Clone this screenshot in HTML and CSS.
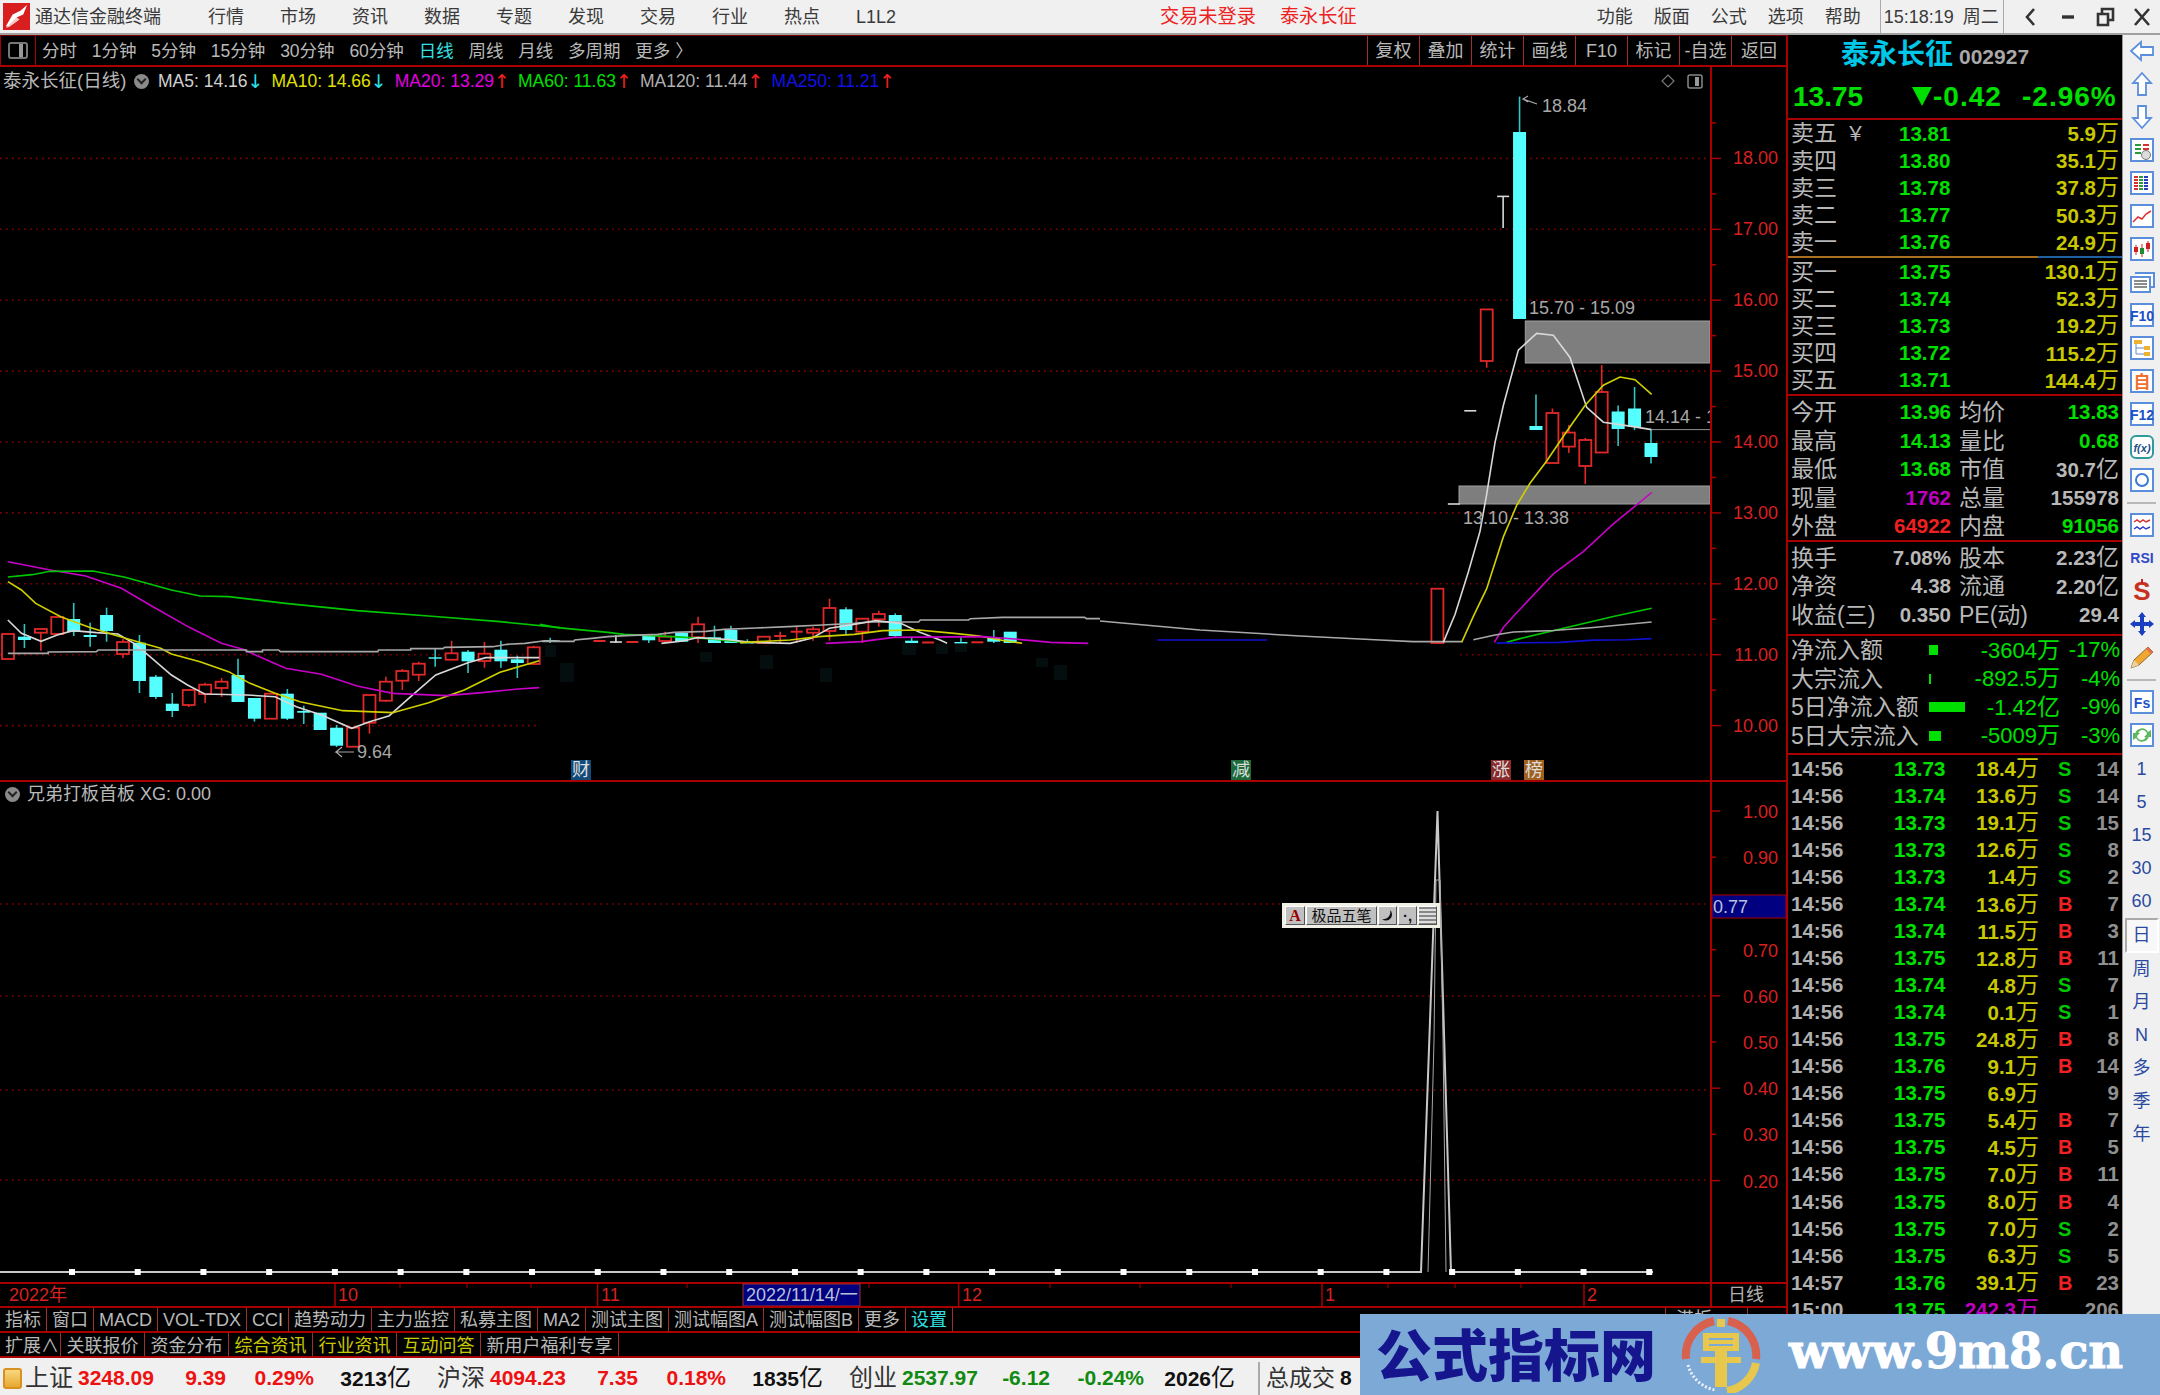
FILE: index.html

```html
<!DOCTYPE html>
<html lang="zh-CN">
<head>
  <meta charset="UTF-8" />
  <title>通达信金融终端</title>
  <link rel="stylesheet" href="styles.css">
</head>
<body>
  <header class="titlebar">
    <svg class="logo" viewBox="0 0 28 28">
      <rect width="28" height="28" fill="#d81e1e" />
      <path d="M3 24 L10 12 L18 8 L25 2 L21 12 L14 15 L17 17 L6 25 Z" fill="#fff" />
      <path d="M3 26 L6 25 L17 17 L14 15 Z" fill="#f3c9c0" />
    </svg>
    <span class="app-name">通达信金融终端</span>
    <nav class="menu">
      <a>行情</a><a>市场</a><a>资讯</a><a>数据</a><a>专题</a><a>发现</a><a>交易</a><a>行业</a><a>热点</a><a>L1L2</a>
    </nav>
    <span class="login">交易未登录</span>
    <span class="login stock">泰永长征</span>
    <nav class="menu-right">
      <a>功能</a><a>版面</a><a>公式</a><a>选项</a><a>帮助</a>
    </nav>
    <div class="clock"><span>15:18:19</span><span>周二</span></div>
    <div class="win-btns">
      <svg viewBox="0 0 24 24"><path d="M15 4 L8 12 L15 20" /></svg>
      <svg viewBox="0 0 24 24"><path d="M6 12 H18" class="thick" /></svg>
      <svg viewBox="0 0 24 24"><path d="M5 9 H15 V20 H5 Z M9 9 V4 H20 V15 H15" /></svg>
      <svg viewBox="0 0 24 24"><path d="M5 4 L19 20 M19 4 L5 20" /></svg>
    </div>
  </header>

  <div class="workspace">
    <div class="main-col">
      <div class="toolbar">
        <div class="panel-btn"><i></i></div>
        <div class="periods">
          <a>分时</a><a>1分钟</a><a>5分钟</a><a>15分钟</a><a>30分钟</a><a>60分钟</a><a class="on">日线</a><a>周线</a><a>月线</a><a>多周期</a><a>更多 〉</a>
        </div>
        <div class="tools">
          <a>复权</a><a>叠加</a><a>统计</a><a>画线</a><a>F10</a><a>标记</a><a>-自选</a><a>返回</a>
        </div>
      </div>

      <div class="chart-wrap">
        <svg id="chart" class="chart" viewBox="0 67 1786 1239" width="1786" height="1239"></svg>
        <div class="legend">
          <span class="legend-name">泰永长征(日线)</span>
          <span class="legend-dot"></span>
          <span class="ma-white">MA5: 14.16</span><span class="down">↓</span>
          <span class="ma-yellow">MA10: 14.66</span><span class="down">↓</span>
          <span class="ma-pink">MA20: 13.29</span><span class="up">↑</span>
          <span class="ma-green">MA60: 11.63</span><span class="up">↑</span>
          <span class="ma-gray">MA120: 11.44</span><span class="up">↑</span>
          <span class="ma-blue">MA250: 11.21</span><span class="up">↑</span>
        </div>
        <div class="legend legend-low">
          <span class="legend-dot"></span>
          <span class="legend-name">兄弟打板首板 XG: 0.00</span>
        </div>
        <div class="ime">
          <span class="ime-a">A</span>
          <span class="ime-name">极品五笔</span>
          <span class="ime-btn"><svg viewBox="0 0 14 14" width="14" height="14"><path d="M9 1 A6 6 0 1 1 1 10 A7 7 0 0 0 9 1 Z" fill="#111" /></svg></span>
          <span class="ime-btn">·,</span>
          <span class="ime-btn ime-kb"></span>
        </div>
      </div>

      <div class="tabs tabs-one">
        <a>指标</a><a>窗口</a><a>MACD</a><a>VOL-TDX</a><a>CCI</a><a>趋势动力</a><a>主力监控</a><a>私募主图</a><a>MA2</a><a>测试主图</a><a>测试幅图A</a><a>测试幅图B</a><a>更多</a><a class="cyan">设置</a>
        <a class="tab-end">港板</a>
      </div>
      <div class="tabs tabs-two">
        <a class="tab-first">扩展∧</a><a>关联报价</a><a>资金分布</a><a class="yellow">综合资讯</a><a class="yellow">行业资讯</a><a class="yellow">互动问答</a><a>新用户福利专享</a>
      </div>
    </div>

    <aside class="quote">
      <div class="q-head">
        <div class="q-title"><span class="q-name">泰永长征</span><span class="q-code">002927</span></div>
        <div class="q-price">
          <span class="q-last">13.75</span>
          <span class="q-chg"><i class="tri"></i>-0.42</span>
          <span>-2.96%</span>
        </div>
      </div>

      <div class="book">
        <div class="b-row"><span>卖五 <em>￥</em></span><b>13.81</b><u>5.9<s>万</s></u></div>
        <div class="b-row"><span>卖四</span><b>13.80</b><u>35.1<s>万</s></u></div>
        <div class="b-row"><span>卖三</span><b>13.78</b><u>37.8<s>万</s></u></div>
        <div class="b-row"><span>卖二</span><b>13.77</b><u>50.3<s>万</s></u></div>
        <div class="b-row"><span>卖一</span><b>13.76</b><u>24.9<s>万</s></u></div>
      </div>
      <div class="mid-line"></div>
      <div class="book line-b">
        <div class="b-row"><span>买一</span><b>13.75</b><u>130.1<s>万</s></u></div>
        <div class="b-row"><span>买二</span><b>13.74</b><u>52.3<s>万</s></u></div>
        <div class="b-row"><span>买三</span><b>13.73</b><u>19.2<s>万</s></u></div>
        <div class="b-row"><span>买四</span><b>13.72</b><u>115.2<s>万</s></u></div>
        <div class="b-row"><span>买五</span><b>13.71</b><u>144.4<s>万</s></u></div>
      </div>

      <div class="stats line-b">
        <div class="s-row"><span>今开</span><b>13.96</b><span>均价</span><b>13.83</b></div>
        <div class="s-row"><span>最高</span><b>14.13</b><span>量比</span><b>0.68</b></div>
        <div class="s-row"><span>最低</span><b>13.68</b><span>市值</span><b class="w">30.7<s>亿</s></b></div>
        <div class="s-row"><span>现量</span><b class="p">1762</b><span>总量</span><b class="w">155978</b></div>
        <div class="s-row"><span>外盘</span><b class="r">64922</b><span>内盘</span><b>91056</b></div>
      </div>

      <div class="stats fin line-b">
        <div class="s-row"><span>换手</span><b class="w">7.08%</b><span>股本</span><b class="w">2.23<s>亿</s></b></div>
        <div class="s-row"><span>净资</span><b class="w">4.38</b><span>流通</span><b class="w">2.20<s>亿</s></b></div>
        <div class="s-row"><span>收益(三)</span><b class="w">0.350</b><span>PE(动)</span><b class="w">29.4</b></div>
      </div>

      <div class="flow line-b">
        <div class="f-row"><span>净流入额</span><i class="bar bar-a"></i><b>-3604<s>万</s></b><b>-17%</b></div>
        <div class="f-row"><span>大宗流入</span><i class="bar bar-b"></i><b>-892.5<s>万</s></b><b>-4%</b></div>
        <div class="f-row"><span>5日净流入额</span><i class="bar bar-c"></i><b>-1.42<s>亿</s></b><b>-9%</b></div>
        <div class="f-row"><span>5日大宗流入</span><i class="bar bar-d"></i><b>-5009<s>万</s></b><b>-3%</b></div>
      </div>

      <div class="ticks">
        <div class="t-row"><span>14:56</span><b>13.73</b><u>18.4<s>万</s></u><em class="s">S</em><span class="n">14</span></div>
        <div class="t-row"><span>14:56</span><b>13.74</b><u>13.6<s>万</s></u><em class="s">S</em><span class="n">14</span></div>
        <div class="t-row"><span>14:56</span><b>13.73</b><u>19.1<s>万</s></u><em class="s">S</em><span class="n">15</span></div>
        <div class="t-row"><span>14:56</span><b>13.73</b><u>12.6<s>万</s></u><em class="s">S</em><span class="n">8</span></div>
        <div class="t-row"><span>14:56</span><b>13.73</b><u>1.4<s>万</s></u><em class="s">S</em><span class="n">2</span></div>
        <div class="t-row"><span>14:56</span><b>13.74</b><u>13.6<s>万</s></u><em>B</em><span class="n">7</span></div>
        <div class="t-row"><span>14:56</span><b>13.74</b><u>11.5<s>万</s></u><em>B</em><span class="n">3</span></div>
        <div class="t-row"><span>14:56</span><b>13.75</b><u>12.8<s>万</s></u><em>B</em><span class="n">11</span></div>
        <div class="t-row"><span>14:56</span><b>13.74</b><u>4.8<s>万</s></u><em class="s">S</em><span class="n">7</span></div>
        <div class="t-row"><span>14:56</span><b>13.74</b><u>0.1<s>万</s></u><em class="s">S</em><span class="n">1</span></div>
        <div class="t-row"><span>14:56</span><b>13.75</b><u>24.8<s>万</s></u><em>B</em><span class="n">8</span></div>
        <div class="t-row"><span>14:56</span><b>13.76</b><u>9.1<s>万</s></u><em>B</em><span class="n">14</span></div>
        <div class="t-row"><span>14:56</span><b>13.75</b><u>6.9<s>万</s></u><em></em><span class="n">9</span></div>
        <div class="t-row"><span>14:56</span><b>13.75</b><u>5.4<s>万</s></u><em>B</em><span class="n">7</span></div>
        <div class="t-row"><span>14:56</span><b>13.75</b><u>4.5<s>万</s></u><em>B</em><span class="n">5</span></div>
        <div class="t-row"><span>14:56</span><b>13.75</b><u>7.0<s>万</s></u><em>B</em><span class="n">11</span></div>
        <div class="t-row"><span>14:56</span><b>13.75</b><u>8.0<s>万</s></u><em>B</em><span class="n">4</span></div>
        <div class="t-row"><span>14:56</span><b>13.75</b><u>7.0<s>万</s></u><em class="s">S</em><span class="n">2</span></div>
        <div class="t-row"><span>14:56</span><b>13.75</b><u>6.3<s>万</s></u><em class="s">S</em><span class="n">5</span></div>
        <div class="t-row"><span>14:57</span><b>13.76</b><u>39.1<s>万</s></u><em>B</em><span class="n">23</span></div>
        <div class="t-row"><span>15:00</span><b>13.75</b><u class="p">242.3<s>万</s></u><em></em><span class="n">206</span></div>
      </div>
    </aside>

    <div class="side">
      <svg class="ico" viewBox="0 0 28 28"><path class="arw" d="M3 14 L13 5 V10 H25 V18 H13 V23 Z" /></svg>
      <svg class="ico" viewBox="0 0 28 28"><path class="arw" d="M14 3 L23 13 H18 V25 H10 V13 H5 Z" /></svg>
      <svg class="ico" viewBox="0 0 28 28"><path class="arw" d="M14 25 L23 15 H18 V3 H10 V15 H5 Z" /></svg>
      <svg class="ico" viewBox="0 0 28 28"><rect class="bx" x="3" y="3" width="22" height="22" /><path d="M7 9 H13 M7 13 H13" stroke="#2a9a3a" stroke-width="2" /><path d="M15 9 H21 M15 13 H21" stroke="#d83030" stroke-width="2" /><path d="M7 17 H13" stroke="#2a9a3a" stroke-width="2" /><circle cx="18" cy="19" r="4.5" fill="#ddd" stroke="#777" /></svg>
      <svg class="ico" viewBox="0 0 28 28"><rect class="bx" x="3" y="3" width="22" height="22" /><path d="M8 7 V21" stroke="#d83030" stroke-width="4" stroke-dasharray="2 1" /><path d="M13 7 V21" stroke="#2a9a3a" stroke-width="4" stroke-dasharray="2 1" /><path d="M18 7 V21" stroke="#2040c0" stroke-width="4" stroke-dasharray="2 1" /></svg>
      <svg class="ico" viewBox="0 0 28 28"><rect class="bx" x="3" y="3" width="22" height="22" /><path d="M5 20 L10 15 L14 17 L18 12 L23 9" fill="none" stroke="#e03030" stroke-width="1.5" /></svg>
      <svg class="ico" viewBox="0 0 28 28"><rect class="bx" x="3" y="3" width="22" height="22" /><path d="M8 10 V20 M14 9 V22 M20 6 V17" stroke="#d02020" /><rect x="6" y="12" width="4" height="5" fill="#d02020" /><rect x="12" y="13" width="4" height="6" fill="#208a30" /><rect x="18" y="8" width="4" height="6" fill="#d02020" /></svg>
      <svg class="ico" viewBox="0 0 28 28"><path class="bxl" d="M7 5 H26 V19 H22 M3 9 H22 V24 H3 Z" /><path d="M6 13 H19 M6 16 H19 M6 19 H19" stroke="#666" stroke-width="1.5" /></svg>
      <svg class="ico" viewBox="0 0 28 28"><rect class="bx" x="3" y="3" width="22" height="22" /><text class="ico-t" x="14" y="19.5">F10</text></svg>
      <svg class="ico" viewBox="0 0 28 28"><rect class="bx" x="3" y="3" width="22" height="22" /><path d="M8 9 V20 H16 M8 14 H16" fill="none" stroke="#6688cc" /><rect x="6" y="6" width="8" height="4" fill="#f0b030" /><rect x="16" y="12" width="6" height="4" fill="#f0b030" /><rect x="16" y="18" width="6" height="4" fill="#f0b030" /></svg>
      <svg class="ico" viewBox="0 0 28 28"><rect class="bx" x="3" y="3" width="22" height="22" /><text class="ico-t ico-o" x="14" y="21">自</text></svg>
      <svg class="ico" viewBox="0 0 28 28"><rect class="bx" x="3" y="3" width="22" height="22" /><text class="ico-t" x="14" y="19.5">F12</text></svg>
      <svg class="ico" viewBox="0 0 28 28"><rect x="3" y="3" width="22" height="22" rx="5" fill="#fff" stroke="#2f9a9a" stroke-width="2" /><text class="ico-f" x="14" y="19">f(x)</text></svg>
      <svg class="ico" viewBox="0 0 28 28"><rect class="bx" x="3" y="3" width="22" height="22" /><circle cx="14" cy="14" r="6" fill="none" stroke="#3a7ad8" stroke-width="2" /></svg>
      <hr />
      <svg class="ico" viewBox="0 0 28 28"><rect class="bx" x="3" y="3" width="22" height="22" /><path d="M6 11 L9 9 L12 11 L15 9 L18 11 L22 9" fill="none" stroke="#d83030" stroke-width="1.5" /><path d="M6 18 L9 16 L12 18 L15 16 L18 18 L22 16" fill="none" stroke="#3040d0" stroke-width="1.5" /></svg>
      <svg class="ico" viewBox="0 0 28 28"><text class="ico-rsi" x="14" y="19">RSI</text></svg>
      <svg class="ico" viewBox="0 0 28 28"><text class="ico-s" x="14" y="23">S</text><path d="M14 2 L14 7" stroke="#d02020" stroke-width="2" /></svg>
      <svg class="ico" viewBox="0 0 28 28"><path d="M14 2 L18 7 H16 V12 H21 V10 L26 14 L21 18 V16 H16 V21 H18 L14 26 L10 21 H12 V16 H7 V18 L2 14 L7 10 V12 H12 V7 H10 Z" fill="#1a3fc0" /></svg>
      <svg class="ico" viewBox="0 0 28 28"><path d="M3 25 L6 17 L20 4 L25 9 L11 22 Z" fill="#f0a830" stroke="#8a6a30" /><path d="M3 25 L6 17 L11 22 Z" fill="#eed0a0" /><path d="M20 4 L25 9 L23 11 L18 6 Z" fill="#e86a50" /></svg>
      <hr />
      <svg class="ico" viewBox="0 0 28 28"><rect class="bx" x="3" y="3" width="22" height="22" /><text class="ico-t" x="14" y="19.5">Fs</text></svg>
      <svg class="ico ico-last" viewBox="0 0 28 28"><rect class="bx" x="3" y="3" width="22" height="22" fill="#e8f0e8" /><path d="M7 13 A7 7 0 0 1 20 11 L23 9 V16 H16 L19 13 A4 4 0 0 0 10 14 Z M21 15 A7 7 0 0 1 8 17 L5 19 V12 H12 L9 15 A4 4 0 0 0 18 14 Z" fill="#5cb85c" /></svg>
      <a class="per">1</a><a class="per">5</a><a class="per">15</a><a class="per">30</a><a class="per">60</a>
      <a class="per active">日</a><a class="per">周</a><a class="per">月</a><a class="per">N</a><a class="per">多</a><a class="per">季</a><a class="per">年</a>
    </div>
  </div>

  <footer class="status">
    <i class="st-ico"></i>
    <span class="st-name">上证</span><span class="st-val red">3248.09</span><span class="st-chg red">9.39</span><span class="st-pct red">0.29%</span><span class="st-amt">3213<s>亿</s></span>
    <span class="st-name gap">沪深</span><span class="st-val red">4094.23</span><span class="st-chg red">7.35</span><span class="st-pct red">0.18%</span><span class="st-amt">1835<s>亿</s></span>
    <span class="st-name gap">创业</span><span class="st-val grn">2537.97</span><span class="st-chg grn">-6.12</span><span class="st-pct grn wide">-0.24%</span><span class="st-amt wide">2026<s>亿</s></span>
    <span class="st-total">总成交</span><span class="st-sum">8</span>
  </footer>

  <div class="watermark">
    <span class="wm-cn">公式指标网</span>
    <svg class="wm-logo" viewBox="0 0 80 76">
      <path d="M5 42 A35 35 0 0 1 33 4" fill="none" stroke="#d8614e" stroke-width="8" />
      <path d="M47 4 A35 35 0 0 1 75 42" fill="none" stroke="#d8614e" stroke-width="8" />
      <path d="M75 46 A35 35 0 0 1 46 74" fill="none" stroke="#e8c84c" stroke-width="8" />
      <path d="M7 48 A35 35 0 0 0 34 73" fill="none" stroke="#eef2f8" stroke-width="3" stroke-dasharray="2 2" />
      <path d="M36 2 H44 V10 H36 Z M22 16 H58 V34 H46 V40 H60 V46 H46 V70 H34 V46 H20 V40 H34 V34 H22 Z" fill="#e8c84c" />
      <path d="M28 22 H52 M28 28 H52" stroke="#7da9d7" stroke-width="2" />
    </svg>
    <span class="wm-url">www.9m8.cn</span>
  </div>

  <script src="chart.js"></script>
</body>
</html>
```

FILE: styles.css

```css
* { box-sizing: border-box; }
html, body { margin: 0; padding: 0; }
body {
  width: 2160px;
  height: 1395px;
  overflow: hidden;
  position: relative;
  background: #000;
  font-family: "Liberation Sans", "Noto Sans CJK SC", sans-serif;
  font-size: 18px;
  line-height: 22px;
  color: #b8b8b8;
  display: flex;
  flex-direction: column;
}
s { text-decoration: none; font-weight: 400; }
u { text-decoration: none; }
em { font-style: normal; }

/* title bar */
.titlebar { height: 35px; flex: none; display: flex; align-items: center; background: #f0f0f0; border-bottom: 2px solid #a0a0a0; color: #3a3a3a; }
.logo { width: 27px; height: 27px; margin-left: 3px; flex: none; }
.app-name { margin-left: 5px; width: 173px; font-size: 18px; }
.menu { display: flex; width: 785px; }
.menu a { width: 72px; flex: none; }
.login { color: #ee2222; font-size: 19.2px; margin-left: 167px; }
.login.stock { margin-left: 24px; }
.menu-right { display: flex; margin-left: 240px; width: 283px; }
.menu-right a { width: 57px; flex: none; }
.clock { display: flex; gap: 9px; align-items: center; width: 124px; height: 33px; padding-left: 3px; border-left: 1px solid #aaa; border-right: 1px solid #aaa; }
.win-btns { display: flex; flex: 1; padding-left: 15px; gap: 13px; }
.win-btns svg { width: 24px; height: 24px; }
.win-btns path { fill: none; stroke: #333; stroke-width: 2.6; }
.win-btns .thick { stroke-width: 3.4; }

.workspace { flex: 1; display: flex; min-height: 0; }
.main-col { width: 1786px; flex: none; display: flex; flex-direction: column; }

/* period toolbar */
.toolbar { height: 32px; flex: none; display: flex; align-items: center; border-top: 1px solid #700; border-bottom: 2px solid #a80000; }
.panel-btn { width: 36px; height: 100%; display: flex; align-items: center; justify-content: center; border-right: 1px solid #a80000; border-left: 1px solid #a80000; }
.panel-btn i { width: 20px; height: 17px; border: 2px solid #777; border-radius: 3px; background: linear-gradient(90deg, #000 55%, #999 55%, #999 80%, #000 80%); }
.periods { display: flex; gap: 14.8px; margin-left: 6px; font-size: 17.5px; }
.periods .on { color: #35e0e0; }
.tools { margin-left: auto; display: flex; height: 100%; }
.tools a { display: flex; align-items: center; justify-content: center; width: 52px; border-left: 1px solid #a03030; }
.tools a:last-child { width: 55px; }

/* chart */
.chart-wrap { position: relative; width: 1786px; height: 1239px; flex: none; }
.chart { display: block; background: #000; }
.chart text { font-family: "Liberation Sans", "Noto Sans CJK SC", sans-serif; font-size: 18px; }
.legend { position: absolute; left: 3px; top: 2px; height: 24px; display: flex; align-items: center; font-size: 17.5px; white-space: nowrap; }
.legend-low { top: 715px; left: 5px; }
.legend-low .legend-name { margin-left: 7px; width: auto; font-size: 18px; }
.legend-name { color: #b8b8b8; width: 131px; font-size: 18.5px; }
.legend-dot { position: relative; width: 15px; height: 15px; border-radius: 50%; background: #8a8a8a; margin-right: 9px; flex: none; }
.legend-dot::after { content: ""; position: absolute; left: 4px; top: 2px; width: 5px; height: 5px; border-right: 2px solid #222; border-bottom: 2px solid #222; transform: rotate(45deg); }
.legend-low .legend-dot { margin-right: 0; }
.legend .up, .legend .down { width: 24px; font-family: "DejaVu Sans", sans-serif; font-size: 19px; }
.up { color: #f02020; }
.down { color: #25e0e8; }
.ma-white { color: #d0d0d0; }
.ma-yellow { color: #e0e000; }
.ma-pink { color: #e000e0; }
.ma-green { color: #00e000; }
.ma-gray { color: #b0b0b0; }
.ma-blue { color: #1010e8; }

.ime { position: absolute; left: 1282px; top: 836px; width: 158px; height: 25px; padding: 3px; background: #f0f0e6; display: flex; gap: 1px; color: #111; }
.ime span { background: #c0c0c0; border-top: 1px solid #fff; border-left: 1px solid #fff; border-bottom: 1px solid #555; border-right: 1px solid #555; display: flex; align-items: center; justify-content: center; height: 19px; line-height: 1; }
.ime-a { width: 20px; color: #900; font-family: "Liberation Serif", serif; font-weight: 700; font-size: 16px; }
.ime-name { width: 71px; font-size: 15px; white-space: nowrap; }
.ime-btn { width: 19px; font-size: 15px; font-weight: 700; }
.ime-kb { background: repeating-linear-gradient(#888 0 2px, #ddd 2px 4px) !important; }

/* bottom tabs */
.tabs { display: flex; flex: none; border-top: 2px solid #a80000; }
.tabs-one { height: 25px; position: relative; }
.tabs-two { height: 27px; border-bottom: 2px solid #a80000; }
.tabs a { display: flex; align-items: center; padding: 0 5px; border-right: 1px solid #a03030; white-space: nowrap; font-size: 18px; }
.tabs-two a { padding: 2px 5.5px 0; }
.tabs a.tab-first { width: 61px; padding: 2px 3px 0 5px; overflow: hidden; }
.tabs .yellow { color: #c8c800; }
.tabs .cyan { color: #2ee0e0; }
.tabs a.tab-end { position: absolute; left: 1665px; top: 0; height: 100%; padding-left: 10px; width: 83px; border-left: 1px solid #a03030; align-items: flex-start; }

/* quote panel */
.quote { width: 337px; flex: none; border-left: 2px solid #a80000; border-right: 1px solid #999; display: flex; flex-direction: column; overflow: hidden; background: #000; font-size: 20.5px; }
.quote b { font-weight: 700; color: #00e000; }
.quote s { font-size: 23px; }
.line-b { border-bottom: 2px solid #a80000; }
.q-head { height: 85px; flex: none; border-bottom: 2px solid #a80000; }
.q-title { height: 40px; padding-left: 53px; display: flex; align-items: center; gap: 6px; }
.q-name { color: #00c8e8; font-size: 28px; font-weight: 700; line-height: 32px; }
.q-code { font-size: 21px; font-weight: 700; color: #a8a8a8; padding-top: 4px; }
.q-price { display: flex; align-items: center; height: 43px; padding-left: 5px; font-size: 28px; font-weight: 700; color: #00e000; letter-spacing: 1px; }
.q-last { width: 119px; letter-spacing: 0; }
.q-chg { width: 110px; display: flex; align-items: center; }
.tri { width: 0; height: 0; border-left: 10px solid transparent; border-right: 10px solid transparent; border-top: 19px solid #00e000; margin-right: 1px; }

.book { flex: none; }
.b-row { height: 27.2px; display: grid; grid-template-columns: 108px 60px 1fr; align-items: center; padding: 0 3px; }
.b-row span { font-size: 23px; }
.b-row em { font-size: 20px; margin-left: 2px; }
.b-row u { text-align: right; color: #c8c800; font-weight: 700; }
.b-row s { color: #c8c800; }
.mid-line { height: 2px; flex: none; background: linear-gradient(90deg, #a87020 75%, #2060a0 75%); }

.stats { flex: none; padding-top: 2px; }
.s-row { height: 28.5px; display: grid; grid-template-columns: 50px 110px 60px 1fr; align-items: center; padding: 0 3px; }
.s-row span { font-size: 23px; white-space: nowrap; }
.s-row b { text-align: right; }
.s-row span:nth-child(3) { padding-left: 8px; }
.quote .w { color: #b8b8b8; }
.quote .p { color: #c000c0; }
.quote .r { color: #f02020; }
.fin { padding: 1px 0 5px; }

.flow { flex: none; padding-bottom: 3px; }
.f-row { height: 28.6px; display: grid; grid-template-columns: 138px 40px 91px 1fr; align-items: center; padding-left: 3px; padding-right: 2px; }
.f-row span { font-size: 23px; white-space: nowrap; }
.f-row b { text-align: right; font-weight: 400; font-size: 22px; }
.f-row s { font-size: 23px; }
.f-row .bar { background: #00e000; height: 10px; }
.bar-a { width: 9px; }
.bar-b { width: 1.5px; }
.bar-c { width: 36px; }
.bar-d { width: 12px; }

.ticks { flex: none; }
.t-row { height: 27.05px; display: grid; grid-template-columns: 103px 60px 85px 40px 1fr; align-items: center; padding: 0 3px; }
.t-row span { font-weight: 700; color: #b0b0b0; }
.t-row u { text-align: right; color: #c8c800; font-weight: 700; white-space: nowrap; }
.t-row u.p { color: #c000c0; }
.t-row s { color: #c8c800; }
.t-row u.p s { color: #c000c0; }
.t-row em { color: #ee2222; padding-left: 19px; font-weight: 700; font-size: 20px; }
.t-row em.s { color: #00c800; }
.t-row .n { text-align: right; color: #909090; }

/* right icon strip */
.side { width: 37px; flex: none; background: #f0f0f0; display: flex; flex-direction: column; align-items: center; }
.ico { width: 28px; height: 28px; margin: 2.5px 0; flex: none; }
.ico:first-child { margin-top: 2px; }
.ico-last { margin-bottom: 3.5px; }
.arw { fill: #fff; stroke: #5b8fdc; stroke-width: 1.8; }
.bx { fill: #fff; stroke: #5b8fdc; stroke-width: 2; }
.bxl { fill: #fff; stroke: #5b8fdc; stroke-width: 2; }
.ico-t { font: 700 14px "Liberation Sans", sans-serif; fill: #2050c8; text-anchor: middle; }
.ico-o { font: 700 17px "Noto Sans CJK SC", sans-serif; fill: #f07030; }
.ico-f { font: italic 700 11px "Liberation Sans", sans-serif; fill: #205088; text-anchor: middle; }
.ico-rsi { font: 700 14px "Liberation Sans", sans-serif; fill: #3048c8; text-anchor: middle; }
.ico-s { font: 700 26px "Liberation Sans", sans-serif; fill: #c83020; text-anchor: middle; }
.side hr { width: 29px; height: 2px; margin: 5px 0 5px; border: none; background: #b8b8b8; flex: none; }
.per { height: 33px; width: 100%; flex: none; display: flex; align-items: center; justify-content: center; color: #2a4aa0; font-size: 18px; }
.per.active { border: 2px solid #fff; border-left-color: #aaa; border-top-color: #aaa; width: 34px; height: 35px; background: #f8f8f8; }

/* status bar */
.status { height: 37px; flex: none; background: #f0f0f0; color: #111; display: flex; align-items: center; padding-top: 3px; font-size: 21px; white-space: nowrap; }
.status s { font-size: 24px; }
.st-ico { width: 19px; height: 21px; margin-left: 3px; border: 2px solid #d89020; border-radius: 3px; background: linear-gradient(#f8d880, #e8a830); flex: none; }
.st-name { width: 48px; margin-left: 3px; font-size: 24px; color: #333; }
.st-name.gap { margin-left: 26px; }
.st-val { width: 77px; margin-left: 5px; font-weight: 700; }
.st-chg { width: 71px; text-align: right; font-weight: 700; }
.st-pct { width: 88px; text-align: right; font-weight: 700; }
.st-pct.wide { width: 94px; }
.st-amt { width: 97px; text-align: right; font-weight: 700; }
.st-amt.wide { width: 91px; }
.red { color: #ee1111; }
.grn { color: #108a10; }
.st-total { margin-left: 23px; padding-left: 6px; border-left: 2px solid #aaa; font-size: 23px; color: #333; height: 33px; line-height: 33px; width: 82px; }
.st-sum { font-weight: 700; }

/* site stamp over the bottom right corner */
.watermark { position: absolute; left: 1360px; top: 1314px; width: 800px; height: 81px; background: #7da9d7; display: flex; align-items: center; }
.wm-cn { margin-left: 16px; width: 298px; color: #15158e; font-family: "Noto Sans CJK SC", sans-serif; font-size: 56px; font-weight: 900; line-height: 1; margin-top: -5px; }
.wm-logo { width: 80px; height: 76px; margin-left: 7px; flex: none; }
.wm-url { margin-left: 28px; color: #fff; font-family: "DejaVu Serif", serif; font-weight: 700; font-size: 48px; -webkit-text-stroke: 1px #fff; line-height: 1; margin-top: -8px; white-space: nowrap; }
```

FILE: chart.js

```js
// draws the kline and indicator panes into the one svg
const svg = document.getElementById('chart');
const CX = i => 8 + 16.43 * i;
const PY = p => 158.4 + (18 - p) * 70.9;
const RED = '#e02828', CYAN = '#55ffff', WICK = '#30c4c4';
let out = '';

function line(x1, y1, x2, y2, color, w) {
  out += `<line x1="${x1}" y1="${y1}" x2="${x2}" y2="${y2}" stroke="${color}" stroke-width="${w || 1}"/>`;
}
function dots(y, x1, x2) {
  out += `<line x1="${x1}" y1="${y}" x2="${x2}" y2="${y}" stroke="#860000" stroke-width="1.6" stroke-dasharray="1.6 4.4"/>`;
}
function text(x, y, s, color, anchor) {
  out += `<text x="${x}" y="${y}" fill="${color}" text-anchor="${anchor || 'start'}" dominant-baseline="central">${s}</text>`;
}
function rect(x, y, w, h, fill, stroke) {
  out += `<rect x="${x}" y="${y}" width="${w}" height="${h}" fill="${fill}"${stroke ? ` stroke="${stroke}" stroke-width="1"` : ''}/>`;
}
function poly(color, pts, w) {
  out += `<polyline fill="none" stroke="${color}" stroke-width="${w || 1.6}" points="${pts.map(p => p.join(',')).join(' ')}"/>`;
}

// one coordinate system per source crop of the chart
const left = pts => pts.map(p => [p[0] / 2.8, 540 + p[1] / 3]);
const mid = pts => pts.map(p => [540 + p[0] / 2.8, 580 + p[1] / 3]);
const right = pts => pts.map(p => [1380 + p[0] / 3, 80 + p[1] / 2.703]);

// grid
[18, 17, 16, 15, 14, 13, 12].forEach(p => dots(PY(p), 0, 1710));
[11, 10].forEach(p => dots(PY(p), 0, 537));
dots(PY(11), 1460, 1710);
[904, 996, 1090, 1180].forEach(y => dots(y, 0, 1710));

// faint leftovers under the cut in the middle of the pane
[[545, 645, 11, 12], [560, 663, 14, 19], [902, 643, 14, 12], [936, 644, 12, 10], [955, 644, 12, 8], [1036, 658, 12, 9], [1054, 665, 13, 15], [700, 652, 12, 10], [760, 655, 13, 14], [820, 668, 12, 14]]
  .forEach(r => rect(r[0], r[1], r[2], r[3], '#050e0e'));

// gray price zones
rect(1525.3, 321, 184.7, 42, '#7e7e7e', '#a0a0a0');
rect(1459, 486, 251, 18, '#7e7e7e', '#a0a0a0');

// [index, colour, bodyTop, bodyBottom, high, low]
const candles = [
  [0, 'r', 634, 659], [1, 'c', 636.7, 640, 624, 648], [2, 'r', 629, 632.7, 629, 650.7], [3, 'r', 617, 634],
  [4, 'c', 619, 632, 603, 636], [5, 'c', 635, 637, 622.7, 646.7], [6, 'c', 615, 631, 607.7, 641.7], [7, 'r', 642, 654, 639, 658],
  [8, 'c', 642.7, 681, 635, 693], [9, 'c', 676.7, 697, 675, 699], [10, 'c', 703.7, 711, 693, 717], [11, 'r', 690, 705, 689, 707],
  [12, 'r', 684.7, 694, 682.7, 703], [13, 'r', 681.7, 688, 678, 697], [14, 'c', 675, 702, 658.7, 702], [15, 'c', 698, 718.7, 698, 721.7],
  [16, 'r', 693.7, 718.7], [17, 'c', 693.7, 718.7, 689, 720], [18, 'c', 711, 712.7, 705.7, 724], [19, 'c', 712.7, 730],
  [20, 'c', 727.7, 745.7, 725, 747], [21, 'r', 727.7, 746.7], [22, 'r', 695, 722.7, 695, 733.7], [23, 'r', 681.7, 700.7, 676.7, 702],
  [24, 'r', 671, 680.7, 669, 690], [25, 'r', 663.7, 674.7, 661.7, 681], [26, 'c', 657.3, 658.3, 649, 666.7], [27, 'r', 653.3, 659.7, 640.7, 659.7],
  [28, 'c', 651.7, 661.3, 650, 673], [29, 'r', 653.7, 661, 642, 667.7], [30, 'c', 649.7, 661.3, 640.7, 667.7], [31, 'c', 659.3, 663, 655.7, 678],
  [32, 'r', 647.3, 664, 645.7, 664],
  [33, 'c', 640, 640.5, 637.7, 643], [36, 'r', 641, 643], [37, 'w', 642, 642.5, 635, 643], [38, 'r', 642, 643],
  [39, 'c', 636, 640.3, 636, 643], [40, 'r', 636.7, 641, 631.7, 643], [41, 'c', 633, 641.7], [42, 'r', 624.3, 637.3, 616.7, 643],
  [43, 'c', 637.3, 643, 625.7, 643], [44, 'c', 630, 643, 625.7, 643], [45, 'c', 642, 642.5, 639.3, 643], [46, 'r', 636.7, 643],
  [47, 'r', 636, 637.3, 631.7, 643], [48, 'r', 631.7, 634.3, 626.7, 643], [49, 'r', 629.3, 632.7, 626.7, 640.7], [50, 'r', 608, 631, 598.7, 640.7],
  [51, 'c', 609.3, 630, 607.3, 635], [52, 'r', 618.7, 631.7, 618.7, 643], [53, 'r', 614, 619.3, 610.7, 626.7], [54, 'c', 615, 636, 613.3, 636.7],
  [55, 'c', 640.7, 643, 636.7, 643], [56, 'r', 642.5, 643], [58, 'c', 642, 642.5, 637.3, 643], [59, 'r', 642.3, 643],
  [60, 'c', 637.3, 641.7, 630, 643], [61, 'c', 631.7, 643],
  [87, 'r', 588.7, 643], [88, 'w', 504, 505.4], [89, 'w', 410.8, 412.2], [90, 'r', 309.4, 361, 309.4, 367.8], [91, 'w', 196.4, 197.6, 197, 228],
  [92, 'c', 132, 319, 96.6, 319], [93, 'c', 426, 430, 394.5, 430], [94, 'r', 413, 463, 408.5, 463], [95, 'r', 432.6, 446.6, 425, 453],
  [96, 'r', 440, 466, 438, 484], [97, 'r', 392, 452.5, 365, 452.5], [98, 'c', 411.5, 429, 405.6, 446], [99, 'c', 408.5, 427, 387, 430], [100, 'c', 443, 457, 430, 463.6]
];
candles.forEach(c => {
  const x = CX(c[0]), color = c[1], top = c[2], bot = c[3];
  const stroke = color === 'r' ? RED : color === 'c' ? WICK : '#d8d8d8';
  if (c[4] !== undefined) line(x, c[4], x, c[5], stroke, 1.6);
  if (color === 'r') {
    const h = Math.max(bot - top, 1);
    if (h < 3) line(x - 6, top, x + 6, top, RED, 2);
    else out += `<rect x="${x - 6}" y="${top}" width="12" height="${h}" fill="#000" stroke="${RED}" stroke-width="1.8"/>`;
  } else if (color === 'c') {
    rect(x - 6.5, top, 13, Math.max(bot - top, 1.4), CYAN);
  } else {
    line(x - 6, top, x + 6, top, '#d8d8d8', 1.6);
  }
});

// moving averages
poly('#d8d8d8', left([[22, 240], [60, 280], [115, 304], [160, 285], [205, 272], [270, 278], [330, 282], [375, 310], [420, 350], [480, 405], [525, 435], [573, 462], [690, 465], [770, 470], [830, 500], [900, 525], [985, 565], [1035, 545], [1090, 527], [1150, 470], [1220, 405], [1310, 368], [1360, 353], [1510, 353]]));
poly('#d0d000', left([[22, 125], [60, 150], [100, 190], [170, 230], [250, 262], [320, 285], [400, 310], [450, 325], [480, 342], [560, 365], [640, 395], [700, 430], [770, 460], [840, 485], [960, 512], [1100, 518], [1200, 488], [1300, 450], [1400, 397], [1510, 362]]));
poly('#c800c8', left([[22, 65], [80, 77], [140, 90], [240, 108], [340, 145], [420, 195], [530, 262], [620, 310], [680, 328], [800, 385], [900, 403], [1000, 438], [1100, 460], [1250, 467], [1350, 458], [1450, 447], [1510, 443]]));
poly('#00c800', left([[22, 111], [90, 104], [140, 94], [260, 93], [350, 112], [480, 150], [560, 168], [640, 170], [800, 190], [1000, 212], [1200, 228], [1400, 245], [1568, 263]]));
poly('#a8a8a8', left([[22, 340], [135, 340], [135, 336], [270, 335], [275, 330], [690, 330], [690, 335], [735, 335], [735, 330], [780, 330], [785, 335], [1058, 335], [1060, 330], [1150, 330], [1150, 326], [1240, 326], [1245, 322], [1380, 320], [1420, 313], [1470, 310], [1520, 303], [1568, 303]]));

poly('#00c800', mid([[0, 133], [50, 143], [100, 148], [190, 157], [235, 163], [370, 170], [470, 176], [560, 186], [640, 185]]));
poly('#a8a8a8', mid([[5, 184], [95, 184], [97, 180], [145, 175], [190, 170], [240, 167], [330, 163], [375, 157], [465, 154], [515, 148], [605, 144], [695, 140], [790, 135], [880, 130], [920, 126], [1060, 126], [1065, 120], [1200, 120], [1205, 116], [1295, 112], [1525, 112], [1530, 116], [1568, 116]]));
poly('#a8a8a8', [[1100, 621], [1200, 630], [1300, 636], [1380, 640], [1413, 641.6], [1461.7, 641.6]]);
poly('#d8d8d8', mid([[340, 190], [400, 183], [440, 173], [520, 178], [590, 187], [700, 190], [760, 175], [810, 145], [870, 135], [940, 122], [1010, 130], [1060, 155], [1120, 180], [1140, 190]]));
poly('#d0d000', mid([[560, 188], [700, 180], [780, 170], [880, 163], [960, 152], [1060, 150], [1160, 160], [1230, 168], [1300, 182], [1350, 190]]));
poly('#c800c8', mid([[800, 190], [900, 185], [990, 172], [1240, 170], [1340, 178], [1430, 187], [1535, 190]]));
poly('#1010d0', [[1157, 640], [1267, 640]]);

poly('#d8d8d8', right([[190, 1520], [225, 1445], [265, 1330], [300, 1220], [320, 1120], [345, 980], [370, 880], [415, 730], [470, 685], [520, 690], [570, 750], [620, 885], [670, 925], [745, 935], [815, 945]]));
poly('#d0d000', right([[245, 1520], [280, 1450], [320, 1375], [370, 1235], [410, 1150], [450, 1090], [500, 1030], [560, 950], [615, 880], [670, 825], [720, 803], [765, 810], [815, 850]]));
poly('#c800c8', right([[343, 1520], [370, 1480], [410, 1440], [520, 1335], [610, 1275], [700, 1200], [815, 1115]]));
poly('#00c800', right([[380, 1520], [420, 1510], [560, 1480], [700, 1450], [815, 1428]]));
poly('#a8a8a8', right([[280, 1513], [345, 1500], [400, 1492], [520, 1488], [640, 1480], [815, 1465]]));
poly('#1010d0', right([[350, 1522], [540, 1520], [640, 1514], [740, 1513], [815, 1510]]));
poly('#909090', [[1652, 429.6], [1710, 429.6]], 1);

// labels on the kline pane
const G = '#a8a8a8';
poly(G, [[1537, 104], [1523, 99], [1528, 96], [1523, 99], [1528, 102]], 1.2);
text(1542, 106, '18.84', G);
text(1529, 308, '15.70 - 15.09', G);
text(1463, 518, '13.10 - 13.38', G);
text(1645, 417, '14.14 - 14.16', G);
poly(G, [[354, 752], [336, 752], [342, 747], [336, 752], [342, 757]], 1.2);
text(357, 752, '9.64', G);

// event flags
[[571, '#124a7a', '财'], [1231, '#1a6a3a', '减'], [1491, '#8a2a2a', '涨'], [1524, '#a06020', '榜']].forEach(f => {
  rect(f[0], 760, 20, 20, f[1]);
  text(f[0] + 10, 770, f[2], '#ddd', 'middle');
});

// lower pane
poly('#c8c8c8', [[0, 1272], [1421, 1272], [1437.5, 811], [1451, 1272], [1653, 1272]], 2);
poly('#a8a8a8', [[1428, 1272], [1434, 1040], [1436, 880], [1440, 880], [1443, 1040], [1446, 1272]], 1);
for (let k = 0; k < 25; k++) rect(69 + 65.72 * k, 1269, 6, 6, '#fff');

// the axis strip covers anything running past the pane
rect(1712, 67, 74, 1239, '#000');

// frame lines
line(0, 781, 1786, 781, '#a80000', 2);
line(0, 1283, 1786, 1283, '#a80000', 2);
line(1711, 67, 1711, 1306, '#a80000', 2);

// price axis
for (let p = 18.5; p >= 10; p -= 0.5) {
  const y = PY(p), major = p === Math.floor(p);
  line(1711, y, major ? 1721 : 1716, y, '#a80000', 1.5);
  if (major) text(1778, y, p.toFixed(2), '#d82020', 'end');
}
for (let v = 1; v > 0.15; v -= 0.1) {
  const y = 1273 - v * 462;
  line(1711, y, Math.round(v * 10) % 2 === 0 ? 1720 : 1716, y, '#a80000', 1.5);
  if (Math.round(v * 10) !== 8) text(1778, y + 1, v.toFixed(2), '#d82020', 'end');
}
rect(1712, 895, 74, 23, '#000080', '#a80000');
text(1713, 907, '0.77', '#b8c0e0');

// corner buttons on the kline pane
out += '<path d="M1668 75 L1674 81 L1668 87 L1662 81 Z" fill="none" stroke="#777" stroke-width="1.2"/>';
out += '<rect x="1688" y="75" width="14" height="13" rx="2" fill="#000" stroke="#888" stroke-width="1.5"/><rect x="1695" y="77" width="4" height="9" fill="#999"/>';

// date axis
[[9, '2022年'], [338, '10'], [601, '11'], [962, '12'], [1325, '1'], [1587, '2']].forEach(d => text(d[0], 1295, d[1], '#d82020'));
[335, 597.6, 958.6, 1322, 1584].forEach(x => line(x, 1283, x, 1306, '#a80000', 1.5));
[400, 467, 531, 687, 869, 1050, 1140, 1231, 1388, 1455, 1521].forEach(x => line(x, 1284, x, 1288, '#a80000', 1));
rect(743, 1284, 117, 22, '#000080', '#a03030');
text(746, 1295, '2022/11/14/一', '#b8c0d8');
text(1728, 1295, '日线', '#b0b0b0');

svg.innerHTML = out;
```
